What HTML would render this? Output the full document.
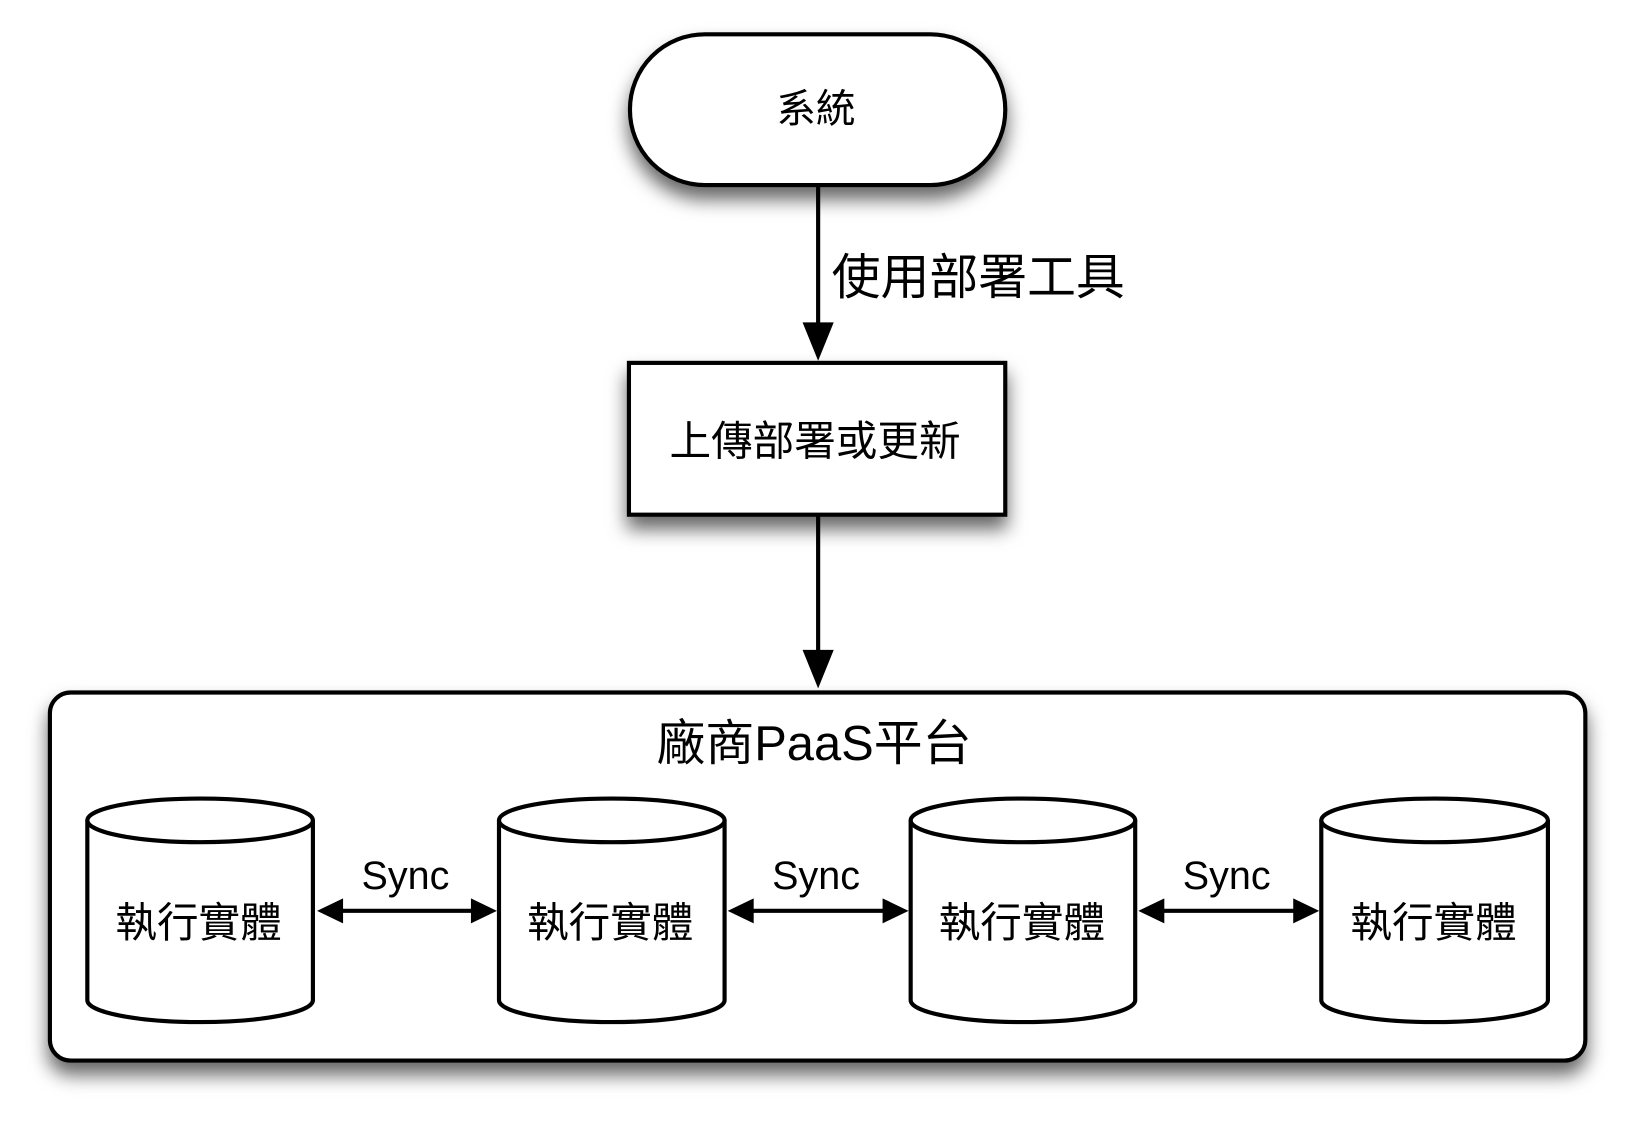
<!DOCTYPE html>
<html><head><meta charset="utf-8"><style>
html,body{margin:0;padding:0;background:#fff;}
svg{display:block}
text{font-family:"Liberation Sans","Noto Sans CJK TC",sans-serif;fill:#000}
</style></head><body>
<svg width="1629" height="1124" viewBox="0 0 1567 1081" preserveAspectRatio="none" xmlns="http://www.w3.org/2000/svg">
<defs>
<filter id="sh" x="-10%" y="-10%" width="120%" height="150%">
<feDropShadow dx="0" dy="12" stdDeviation="9" flood-color="#000" flood-opacity="0.6"/>
</filter>
</defs>
<g stroke="#000" stroke-width="4" fill="#fff">
<rect x="606" y="33" width="361" height="145" rx="72" filter="url(#sh)"/>
<rect x="605" y="349" width="362" height="146" filter="url(#sh)"/>
<rect x="48" y="666" width="1477" height="354" rx="20" filter="url(#sh)"/>
</g>
<g stroke="#000" stroke-width="4">
<line x1="787" y1="178" x2="787" y2="315"/>
<line x1="787" y1="495" x2="787" y2="630"/>
</g>
<polygon points="772,310 802,310 787,347" fill="#000"/>
<polygon points="772,625 802,625 787,662" fill="#000"/>
<text x="785" y="118" font-size="38" text-anchor="middle">系統</text>
<text x="800" y="283" font-size="47">使用部署工具</text>
<text x="784" y="438" font-size="40" text-anchor="middle">上傳部署或更新</text>
<text x="783" y="731" font-size="47" text-anchor="middle">廠商PaaS平台</text>
<g stroke="#000" stroke-width="4" fill="#fff">
<path d="M84,789 V962 A108.5,21 0 0 0 301,962 V789"/>
<ellipse cx="192.5" cy="789" rx="108.5" ry="21"/>
<path d="M480,789 V962 A108.5,21 0 0 0 697,962 V789"/>
<ellipse cx="588.5" cy="789" rx="108.5" ry="21"/>
<path d="M876,789 V962 A108,21 0 0 0 1092,962 V789"/>
<ellipse cx="984" cy="789" rx="108" ry="21"/>
<path d="M1271,789 V962 A109,21 0 0 0 1489,962 V789"/>
<ellipse cx="1380" cy="789" rx="109" ry="21"/>
</g>
<g font-size="40" text-anchor="middle">
<text x="191" y="901">執行實體</text>
<text x="587" y="901">執行實體</text>
<text x="983" y="901">執行實體</text>
<text x="1379" y="901">執行實體</text>
</g>
<g font-size="38" text-anchor="middle">
<text x="390" y="855">Sync</text>
<text x="785" y="855">Sync</text>
<text x="1180" y="855">Sync</text>
</g>
<g stroke="#000" stroke-width="4">
<line x1="320" y1="876" x2="462" y2="876"/>
<line x1="716" y1="876" x2="858" y2="876"/>
<line x1="1111" y1="876" x2="1253" y2="876"/>
</g>
<g fill="#000">
<polygon points="305,876 330,864 330,888"/><polygon points="478,876 453,864 453,888"/>
<polygon points="700,876 725,864 725,888"/><polygon points="874,876 849,864 849,888"/>
<polygon points="1095,876 1120,864 1120,888"/><polygon points="1269,876 1244,864 1244,888"/>
</g>
</svg>
</body></html>
